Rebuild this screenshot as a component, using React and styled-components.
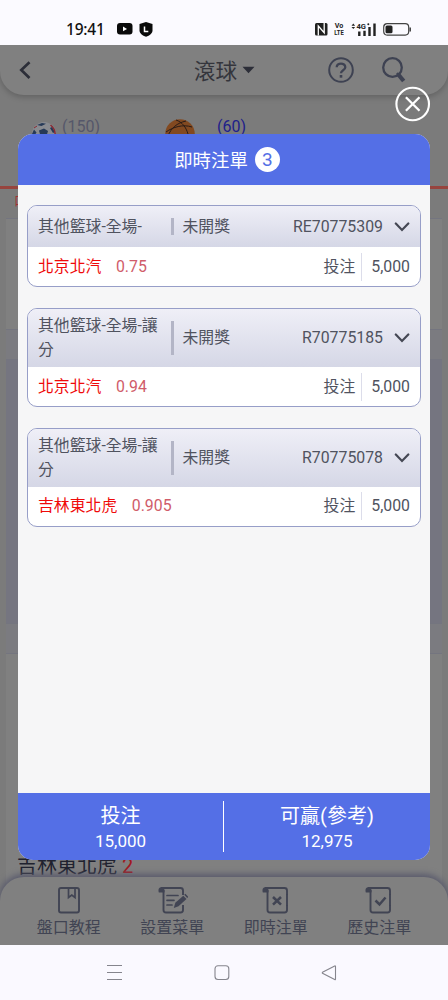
import React from 'react';
import styled, { createGlobalStyle } from 'styled-components';

const GlobalStyle = createGlobalStyle`
  * { box-sizing: border-box; }
  body {
    margin: 0;
    background: #faf9ff;
    font-family: Roboto, "Noto Sans CJK TC", sans-serif;
    color: #50535f;
  }
`;

const Screen = styled.div`
  width: 448px;
  height: 1000px;
  display: flex;
  flex-direction: column;
  overflow: hidden;
`;

/* ---------- system bars ---------- */

const StatusBar = styled.header`
  height: 45px;
  flex: none;
  display: flex;
  align-items: flex-end;
  padding: 0 37px 6px 66px;
  background: #fbfaff;
  color: #111;
`;

const Clock = styled.span`
  font: 500 15.5px/20px "Noto Sans", sans-serif;
  letter-spacing: -0.2px;
  width: 51px;
`;

const StatusIcons = styled.div`
  display: flex;
  align-items: center;
  height: 20px;
  gap: ${(p) => p.$gap}px;
  margin-left: ${(p) => (p.$end ? 'auto' : 0)};
`;

const SystemNav = styled.nav`
  height: 55px;
  flex: none;
  display: flex;
  justify-content: center;
  align-items: center;
  gap: 91px;
  padding-right: 5px;
  background: #faf9ff;
`;

/* ---------- page under the dialog ---------- */

const Page = styled.main`
  position: relative;
  height: 900px;
  flex: none;
  display: flex;
  flex-direction: column;
  overflow: hidden;
  background: #7b7b7b;
`;

const TopBar = styled.div`
  position: relative;
  height: 50px;
  flex: none;
  display: flex;
  align-items: center;
  padding: 0 42px 0 18px;
  border-radius: 0 0 24px 24px;
  background: #808080;
  box-shadow: 0 2px 6px rgba(0, 0, 0, 0.22);
`;

const PageTitle = styled.div`
  display: flex;
  align-items: center;
  gap: 5px;
  margin-left: 162px;
  font-size: 21.6px;
  line-height: 30px;
  color: #34353c;
`;

const TitleText = styled.span`
  padding-top: 4px;
`;

const TopActions = styled.div`
  display: flex;
  align-items: center;
  gap: 28px;
  margin-left: auto;
`;

const SportTabs = styled.div`
  height: 94px;
  flex: none;
  display: flex;
  align-items: flex-start;
  padding: 24px 0 0 32px;
  border-bottom: 3px solid #97443e;
`;

const SportTab = styled.div`
  display: flex;
  align-items: flex-start;
  width: ${(p) => p.$width}px;
  gap: ${(p) => p.$gap}px;
  font-size: 16px;
  line-height: 16px;
  color: ${(p) => (p.$active ? '#20208a' : '#55576a')};
  svg { margin-top: ${(p) => (p.$active ? 0 : 3)}px; }
`;

const LeagueBar = styled.div`
  height: 29px;
  flex: none;
  padding: 3px 14px;
  font-size: 13px;
  line-height: 18px;
  color: #a03434;
`;

const Panel = styled.section`
  flex: none;
  height: ${(p) => p.$height}px;
  margin: 0 6px;
  background: ${(p) => p.$tone};
  border-top: 1px solid #74757f;
`;

const TeamRow = styled.div`
  display: flex;
  gap: 5px;
  margin-top: 199px;
  padding-left: 11px;
  font-size: 20px;
  line-height: 26px;
  color: #20222f;
`;

const Score = styled.span`
  font-size: 20px;
  color: #a01820;
`;

const BottomTabs = styled.nav`
  position: absolute;
  left: 0;
  right: 0;
  bottom: 0;
  height: 68px;
  display: flex;
  padding: 9px 17px 0;
  border-radius: 24px 24px 0 0;
  background: #808080;
  box-shadow: 0 -2px 6px 1px #595a6c;
`;

const BottomTab = styled.div`
  flex: 1;
  display: flex;
  flex-direction: column;
  align-items: center;
  font-size: 16px;
  line-height: 22px;
  gap: 2px;
  color: #414453;
`;

/* ---------- bet slip dialog ---------- */

const Overlay = styled.div`
  position: absolute;
  inset: 0;
  display: flex;
  padding: 89px 18px 85px;
`;

const CloseButton = styled.button`
  position: absolute;
  top: 41px;
  right: 17px;
  width: 36px;
  height: 36px;
  padding: 0;
  border: 0;
  background: none;
  line-height: 0;
`;

const Dialog = styled.div`
  flex: 1;
  display: flex;
  flex-direction: column;
  overflow: hidden;
  border-radius: 15px;
  background: #f6f6f7;
`;

const DialogHeader = styled.div`
  height: 51px;
  flex: none;
  display: flex;
  align-items: center;
  justify-content: center;
  gap: 7px;
  padding: 0 0 1px 6px;
  background: #546fe6;
  color: #fff;
  font-size: 18.4px;
`;

const CountBadge = styled.span`
  width: 25px;
  height: 25px;
  border-radius: 50%;
  background: #fff;
  color: #546fe6;
  font-size: 19px;
  line-height: 26px;
  text-align: center;
`;

const BetList = styled.div`
  flex: 1;
  display: flex;
  flex-direction: column;
  gap: 20.5px;
  padding: 20.2px 9px;
`;

const BetCard = styled.article`
  flex: none;
  overflow: hidden;
  border: 1px solid #979ec8;
  border-radius: 10px;
  background: #fff;
`;

const BetHead = styled.div`
  display: flex;
  align-items: center;
  height: ${(p) => (p.$tall ? 58 : 41)}px;
  padding: 0 10px;
  background: linear-gradient(#efeff7, #d5d7e6);
  font-size: 15.85px;
  line-height: 24px;
`;

const Market = styled.div`
  width: 133px;
  padding-right: 10px;
`;

const Status = styled.div`
  display: flex;
  align-items: center;
  gap: 9px;
  &::before {
    content: '';
    width: 2.5px;
    height: ${(p) => (p.$tall ? 34 : 17)}px;
    background: #b3b5c6;
  }
`;

const BetId = styled.div`
  display: flex;
  align-items: center;
  gap: 11px;
  margin-left: auto;
`;

const BetBody = styled.div`
  display: flex;
  align-items: center;
  height: 39.3px;
  padding: 0 10px;
  font-size: 15.85px;
  line-height: 28px;
`;

const Team = styled.span`
  color: #ef0a0a;
  margin-right: 14.5px;
`;

const Odds = styled.span`
  color: #d05c6a;
`;

const StakeLabel = styled.span`
  margin-left: auto;
  padding-right: 6px;
  border-right: 1px solid #dcddea;
  margin-right: 9px;
`;

const Totals = styled.footer`
  height: 67px;
  flex: none;
  display: flex;
  align-items: center;
  background: #546fe6;
  color: #fff;
`;

const Total = styled.div`
  width: ${(p) => p.$width}px;
  display: flex;
  flex-direction: column;
  align-items: center;
  justify-content: center;
  height: 51px;
  padding-top: 1px;
  & + & { border-left: 1px solid #fff; }
`;

const TotalLabel = styled.span`
  font-size: 20px;
  line-height: 27px;
`;

const TotalValue = styled.span`
  font-size: 17px;
  line-height: 22px;
`;

/* ---------- icons ---------- */

const YoutubeIcon = () => (
  <svg width="16" height="12" viewBox="0 0 16 12">
    <rect width="15.5" height="11.5" rx="3" fill="#0a0a0a" />
    <path d="M6 3.6v4.6l4-2.3z" fill="#fff" />
  </svg>
);

const ShieldIcon = () => (
  <svg width="14" height="15" viewBox="0 0 14 15">
    <path d="M7 0l6.500 2v6.200c0 3.200-2.800 5.200-6.500 6.600C3.300 13.400.5 11.400.5 8.200V2z" fill="#0a0a0a" />
    <path d="M5.500 4.500v5h3.800" fill="none" stroke="#fff" strokeWidth="1.500" />
  </svg>
);

const NfcIcon = () => (
  <svg width="13" height="13" viewBox="0 0 13 13">
    <rect width="12.500" height="12.500" rx="1.500" fill="#202020" />
    <path d="M3.300 12.500V3l5.900 6.700V0" fill="none" stroke="#fff" strokeWidth="1.300" />
  </svg>
);

const VoLteIcon = () => (
  <svg width="10" height="14" viewBox="0 0 10 14" fill="#222" fontFamily="Roboto, sans-serif" fontWeight="700">
    <text x="5" y="6.200" fontSize="7.800" textAnchor="middle" textLength="8.500" lengthAdjust="spacingAndGlyphs">Vo</text>
    <text x="5" y="13" fontSize="7.800" textAnchor="middle" textLength="9.500" lengthAdjust="spacingAndGlyphs">LTE</text>
  </svg>
);

const SignalIcon = () => (
  <svg width="26" height="15" viewBox="0 0 26 15">
    <path d="M.5 3.800L2.300 1.600l1.800 2.200zM.5 4.900L2.300 7l1.800-2.100z" fill="#222" />
    <text x="5.500" y="6.800" fontSize="8" fontWeight="700" fill="#222" textLength="9.500" lengthAdjust="spacingAndGlyphs">4G</text>
    <circle cx="17.300" cy="2.200" r="1" fill="#222" />
    <path d="M8.300 14V9.500M13.500 14V8.700M18.500 14V5M23.500 14V1.500" stroke="#222" strokeWidth="2.400" fill="none" />
  </svg>
);

const BatteryIcon = () => (
  <svg width="28" height="13" viewBox="0 0 28 13">
    <rect x=".7" y=".7" width="25" height="11.400" rx="3.500" fill="none" stroke="#444" strokeWidth="1.200" />
    <rect x="2.500" y="2.500" width="7" height="7.800" rx="1.500" fill="#222" />
    <path d="M27.200 4.500v4" stroke="#333" strokeWidth="1.400" />
  </svg>
);

const BackIcon = () => (
  <svg width="14" height="20" viewBox="0 0 14 20">
    <path d="M11.500 2.300L3.300 10l8.200 8" fill="none" stroke="#2c2e38" strokeWidth="2.700" />
  </svg>
);

const CaretIcon = () => (
  <svg width="13" height="8" viewBox="0 0 13 8">
    <path d="M.5.8h12L6.500 7.200z" fill="#2c2e38" />
  </svg>
);

const HelpIcon = () => (
  <svg width="26" height="26" viewBox="0 0 26 26" fill="none" stroke="#3e4252">
    <circle cx="13" cy="13" r="11.800" strokeWidth="2" />
    <path d="M8.700 10.300c0-5 8.600-5 8.600 0 0 3-4.300 3-4.300 6" strokeWidth="2.300" />
    <path d="M13 18v2.700" strokeWidth="2.600" />
  </svg>
);

const SearchIcon = () => (
  <svg width="24" height="26" viewBox="0 0 24 26" fill="none" stroke="#3e4252">
    <circle cx="10.500" cy="10.500" r="9.300" strokeWidth="2.300" />
    <path d="M16.700 18l5 6" strokeWidth="4.200" />
    <path d="M15 16l2.500 3" strokeWidth="2.500" />
  </svg>
);

const SoccerIcon = () => (
  <svg width="24" height="24" viewBox="0 0 24 24">
    <circle cx="12" cy="12" r="12" fill="#898b90" />
    <path d="M7 8.500l5-2 4 2.500-1.500 5H8.500zM5 3l5-2 4 .8L9.500 4zM0 12l2-4.500 2.500 3-2 3zM18 6l2-1 3 5-2 1z" fill="#263957" />
    <path d="M18.500 3c3.200 2.500 4.500 5 4.700 9" fill="none" stroke="#8a2931" strokeWidth="1.500" />
    <path d="M2 6l3-2M1 13l2 2" stroke="#8a2931" strokeWidth="1" />
  </svg>
);

const BasketballIcon = () => (
  <svg width="30" height="30" viewBox="0 0 30 30">
    <circle cx="15" cy="15" r="14.800" fill="#824920" />
    <g fill="none" stroke="#291b16" strokeWidth="1">
      <path d="M1 13C8 8 18 5 27 8M11 1c6 2 10 7 12 14M3 17C6 9 12 4 21 2" />
    </g>
  </svg>
);

const CloseIcon = () => (
  <svg width="36" height="36" viewBox="0 0 36 36" fill="none" stroke="#fff">
    <circle cx="17.700" cy="18" r="16.300" strokeWidth="2.100" />
    <path d="M10.900 11.200l13.600 13.600M24.500 11.200L10.900 24.800" strokeWidth="2.300" />
  </svg>
);

const ChevronIcon = () => (
  <svg width="16" height="10" viewBox="0 0 16 10">
    <path d="M1.800 1.500L8 8l6.300-6.500" fill="none" stroke="#454854" strokeWidth="2.200" strokeLinecap="round" />
  </svg>
);

const TabIcon = ({ kind }) => (
  <svg width="32" height="29" viewBox={kind === 'book' ? '0 0 32 29' : '-1 0 32 29'} fill="none" stroke="#414453" strokeWidth="1.900">
    {kind === 'book' && (
      <>
        <rect x="6" y="2" width="20" height="24.500" rx="2" />
        <path d="M15.500 2v9.500l3.300-2.500 3.200 2.500V2" strokeWidth="1.700" />
      </>
    )}
    {kind !== 'book' && (
      <>
        <path d="M1.800 6.500C.8 3 2.200 1.200 4.500 1.200S8 3.500 7.400 6.500z" fill="#414453" stroke="none" />
        <path d="M4 2h19.500Q26 2 26 4.500V9" />
        <path d="M6.500 4v20q0 2.500 2.500 2.500h14.500q2.500 0 2.500-2.500v-5" />
      </>
    )}
    {kind === 'edit' && (
      <>
        <path d="M10 9.500h11M10 14.300h7M10 19h5" strokeWidth="1.700" strokeLinecap="round" />
        <path d="M16.800 22l1.500-5.300 8-7 3.200 3.300-8 7.200z" fill="#414453" stroke="none" />
        <path d="M27.200 8.800l1.200-1 3 3.200-1.200 1z" fill="#414453" stroke="none" />
      </>
    )}
    {(kind === 'cancel' || kind === 'check') && <path d="M26 8v12" />}
    {kind === 'cancel' && <path d="M12 11l8 7.600M20 11l-8 7.600" strokeWidth="2.600" />}
    {kind === 'check' && <path d="M11.500 14.500l4 4 6-7" strokeWidth="2.500" />}
  </svg>
);

const MenuKey = () => (
  <svg width="17" height="18" viewBox="0 0 17 18">
    <path d="M1 1.500h15M1 8.500h15M1 15.500h15" stroke="#85858d" strokeWidth="1.100" />
  </svg>
);

const HomeKey = () => (
  <svg width="16" height="16" viewBox="0 0 16 16">
    <rect x="1" y=".7" width="13.800" height="13.800" rx="3" fill="none" stroke="#85858d" strokeWidth="1.100" />
  </svg>
);

const BackKey = () => (
  <svg width="16" height="16" viewBox="0 0 16 16">
    <path d="M14.500 1.500v12.700q0 .8-.8.400L1.500 8.300q-.6-.5 0-1L13.700 1q.8-.4.800.5z" fill="none" stroke="#85858d" strokeWidth="1.100" />
  </svg>
);

/* ---------- data ---------- */

const bets = [
  { market: '其他籃球-全場-', id: 'RE70775309', team: '北京北汽', odds: '0.75' },
  { market: '其他籃球-全場-讓分', id: 'R70775185', team: '北京北汽', odds: '0.94', tall: true },
  { market: '其他籃球-全場-讓分', id: 'R70775078', team: '吉林東北虎', odds: '0.905', tall: true },
];

const tabs = [
  { kind: 'book', label: '盤口教程' },
  { kind: 'edit', label: '設置菜單' },
  { kind: 'cancel', label: '即時注單' },
  { kind: 'check', label: '歷史注單' },
];

export default function App() {
  return (
    <Screen>
      <GlobalStyle />
      <StatusBar>
        <Clock>19:41</Clock>
        <StatusIcons $gap={6}>
          <YoutubeIcon />
          <ShieldIcon />
        </StatusIcons>
        <StatusIcons $gap={6.5} $end>
          <NfcIcon />
          <VoLteIcon />
          <SignalIcon />
          <BatteryIcon />
        </StatusIcons>
      </StatusBar>

      <Page>
        <TopBar>
          <BackIcon />
          <PageTitle><TitleText>滾球</TitleText><CaretIcon /></PageTitle>
          <TopActions><HelpIcon /><SearchIcon /></TopActions>
        </TopBar>
        <SportTabs>
          <SportTab $width={133} $gap={6}><SoccerIcon />(150)</SportTab>
          <SportTab $width={90} $gap={22} $active><BasketballIcon />(60)</SportTab>
        </SportTabs>
        <LeagueBar>口</LeagueBar>
        <Panel $height={111} $tone="#808080" />
        <Panel $height={30} $tone="#7b7b80" />
        <Panel $height={264} $tone="#757580" />
        <Panel $height={30} $tone="#7b7b80" />
        <Panel $height={247} $tone="#808080">
          <TeamRow>吉林東北虎<Score>2</Score></TeamRow>
        </Panel>
        <BottomTabs>
          {tabs.map((t) => (
            <BottomTab key={t.kind}><TabIcon kind={t.kind} />{t.label}</BottomTab>
          ))}
        </BottomTabs>

        <Overlay>
          <Dialog>
            <DialogHeader>即時注單<CountBadge>3</CountBadge></DialogHeader>
            <BetList>
              {bets.map((b) => (
                <BetCard key={b.id}>
                  <BetHead $tall={b.tall}>
                    <Market>{b.market}</Market>
                    <Status $tall={b.tall}>未開獎</Status>
                    <BetId>{b.id}<ChevronIcon /></BetId>
                  </BetHead>
                  <BetBody>
                    <Team>{b.team}</Team>
                    <Odds>{b.odds}</Odds>
                    <StakeLabel>投注</StakeLabel>
                    <span>5,000</span>
                  </BetBody>
                </BetCard>
              ))}
            </BetList>
            <Totals>
              <Total $width={205}><TotalLabel>投注</TotalLabel><TotalValue>15,000</TotalValue></Total>
              <Total $width={207}><TotalLabel>可贏(參考)</TotalLabel><TotalValue>12,975</TotalValue></Total>
            </Totals>
          </Dialog>
          <CloseButton aria-label="close"><CloseIcon /></CloseButton>
        </Overlay>
      </Page>

      <SystemNav><MenuKey /><HomeKey /><BackKey /></SystemNav>
    </Screen>
  );
}
